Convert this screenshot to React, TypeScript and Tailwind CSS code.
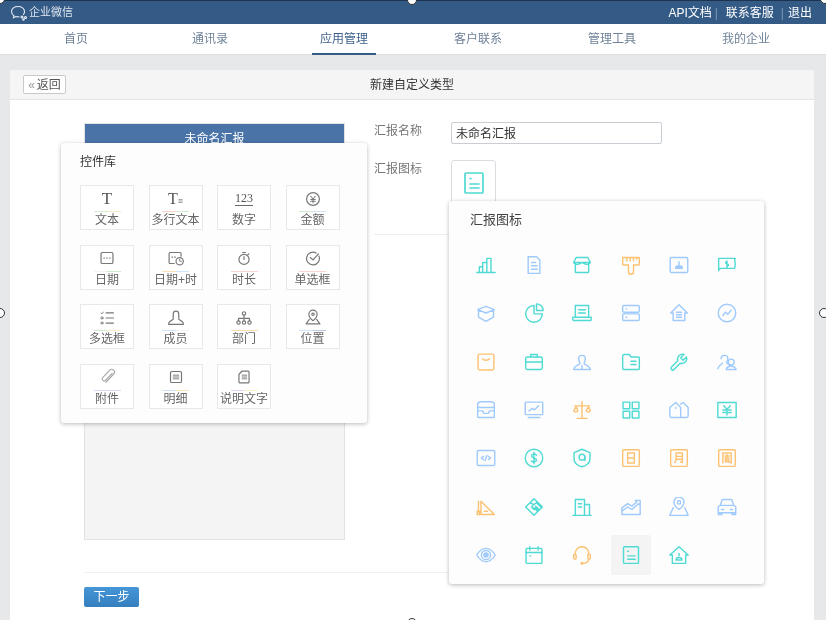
import type { ReactNode } from 'react';

const navItems = ['首页', '通讯录', '应用管理', '客户联系', '管理工具', '我的企业'];

const TEAL = '#4fdad3';
const BLUE = '#9fcafb';
const ORANGE = '#fcc272';

// light accent bar under each control tile
const controls: { name: string; bar: [string, string]; icon: ReactNode }[] = [
  { name: '文本', bar: ['#cdeccd', '#fbe6c8'], icon: <span className="font-['Liberation_Serif',serif] text-[17px] leading-none text-[#555]">T</span> },
  {
    name: '多行文本',
    bar: ['#fbd3c4', '#cdeccd'],
    icon: (
      <span className="flex items-end font-['Liberation_Serif',serif] text-[16px] leading-none text-[#555]">
        T<span className="pb-px text-[9px] leading-none">≡</span>
      </span>
    ),
  },
  { name: '数字', bar: ['#ffffff', '#ffffff'], icon: <span className="border-b border-[#666] font-['Liberation_Serif',serif] text-[12px] leading-[13px] text-[#555]">123</span> },
  {
    name: '金额',
    bar: ['#cdeccd', '#cfe3fb'],
    icon: (
      <G>
        <circle cx="12" cy="12" r="7" />
        <path d="M9.500 9l2.500 3 2.500-3M12 12v4M9.500 12.500h5M9.500 14.500h5" strokeWidth="1.100" />
      </G>
    ),
  },
  {
    name: '日期',
    bar: ['#f4f4f4', '#cdeccd'],
    icon: (
      <G>
        <rect x="5.500" y="6" width="13" height="12" rx="1.500" />
        <path d="M8.500 12h.8M11.600 12h.8M14.700 12h.8" />
      </G>
    ),
  },
  {
    name: '日期+时',
    bar: ['#fbe0b8', '#cfe3fb'],
    icon: (
      <G>
        <path d="M10 18H5.500a1 1 0 0 1-1-1V7a1 1 0 0 1 1-1h11a1 1 0 0 1 1 1v3" />
        <path d="M7.500 11h.8M10.500 11h.8" />
        <circle cx="16" cy="15.500" r="4" />
        <path d="M16 13.500v2h2" strokeWidth="1" />
      </G>
    ),
  },
  {
    name: '时长',
    bar: ['#fbd3d3', '#fbd3d3'],
    icon: (
      <G>
        <circle cx="12" cy="13.500" r="5.500" />
        <path d="M12 13.500v-3M10.500 6h3M16.200 8.500l1 -1" />
      </G>
    ),
  },
  {
    name: '单选框',
    bar: ['#fbd3d3', '#fbd3d3'],
    icon: (
      <G>
        <path d="M18.500 10a7 7 0 1 1-3-3.500" />
        <path d="M9 11.500l3 2.500 6-6.500" />
      </G>
    ),
  },
  {
    name: '多选框',
    bar: ['#cdeccd', '#fbf0c8'],
    icon: (
      <G>
        <path d="M11 6.500h8M11 12h8M11 17.500h8" />
        <path d="M5.500 6.500l1 1 1.500-2" strokeWidth="1" />
        <circle cx="6.500" cy="12" r="1.200" strokeWidth="1" />
        <circle cx="6.500" cy="17.500" r="1.200" strokeWidth="1" />
      </G>
    ),
  },
  {
    name: '成员',
    bar: ['#cfe3fb', '#f4f4f4'],
    icon: (
      <G>
        <path d="M9 13V7.500a3 3 0 0 1 6 0V13c0 1.500 5 2 5 5v1H4v-1c0-3 5-3.500 5-5z" />
      </G>
    ),
  },
  {
    name: '部门',
    bar: ['#fbdcae', '#fbdcae'],
    icon: (
      <G>
        <circle cx="12" cy="7" r="1.800" />
        <circle cx="6" cy="17" r="1.800" />
        <circle cx="12" cy="17" r="1.800" />
        <circle cx="18" cy="17" r="1.800" />
        <path d="M12 9v6M6 15v-2.500h12V15" />
      </G>
    ),
  },
  {
    name: '位置',
    bar: ['#cfe3fb', '#b9c9e6'],
    icon: (
      <G>
        <path d="M12 15s-4.500-3.500-4.500-7a4.500 4.500 0 0 1 9 0c0 3.500-4.500 7-4.500 7z" />
        <circle cx="12" cy="8" r="1.300" />
        <path d="M8 13.500l-3.500 5h15l-3.500-5" />
      </G>
    ),
  },
  {
    name: '附件',
    bar: ['#dcd8fb', '#dcd8fb'],
    icon: (
      <G stroke="#aaaaaa">
        <path d="M17.500 8l-7.500 8a2.200 2.200 0 0 1-3-3l8-8.500a3 3 0 0 1 4.300 4.200l-8.500 9" />
      </G>
    ),
  },
  {
    name: '明细',
    bar: ['#cfe3fb', '#fbe0b8'],
    icon: (
      <G>
        <rect x="6" y="6" width="12" height="12" rx="1.500" />
        <path d="M9 10h6M9 12h6M9 14h6" strokeWidth="1" />
      </G>
    ),
  },
  {
    name: '说明文字',
    bar: ['#e3d6f7', '#fbf0c8'],
    icon: (
      <G>
        <path d="M10 5.500h6.500a1 1 0 0 1 1 1v11a1 1 0 0 1-1 1h-9a1 1 0 0 1-1-1V9z" />
        <path d="M10 10h5M10 12h5M10 14h5" strokeWidth="1" />
      </G>
    ),
  },
];

function G({ children, stroke = '#777777' }: { children: ReactNode; stroke?: string }) {
  return (
    <svg width="22" height="22" viewBox="0 0 24 24" fill="none" stroke={stroke} strokeWidth="1.300" strokeLinecap="round" strokeLinejoin="round">
      {children}
    </svg>
  );
}

const reportIcons: { color: string; d: ReactNode; active?: boolean }[] = [
  { color: TEAL, d: <path d="M1 21h22M4 21v-7h4v7M8 21V9h5v12M13 21V4h5v17" /> },
  { color: BLUE, d: <path d="M5 2h10l4 4v16H5zM9 9h5M9 13h7M9 17h7" /> },
  { color: TEAL, d: <path d="M5 3h14l3 6H2zM4 9v11a1 1 0 0 0 1 1h14a1 1 0 0 0 1-1V9M2 9c2 3 6 3 10 0 4 3 8 3 10 0" /> },
  { color: ORANGE, d: <path d="M2 3h20v8a1 1 0 0 1-1 1h-6v8a3 3 0 0 1-6 0v-8H3a1 1 0 0 1-1-1zM7 3v4M11 3v4M15 3v4M19 3v2" /> },
  { color: BLUE, d: <><rect x="1.500" y="3" width="21" height="18" rx="1.500" /><path d="M12 8v4M8 16c0-2 2-3 4-3s4 1 4 3z" fill={BLUE} /></> },
  { color: TEAL, d: <path d="M2 4h20c-1.500 2-1 3-.5 4s.5 6-.5 8H5c-2 0-3 1-3 3zM12 8c-2-.5-2.500 2 0 2.500s2 3 0 2.500M12 7v8" /> },
  { color: BLUE, d: <path d="M12 4l10 4-10 4L2 8zM3 9v8l9 5 9-5V9" /> },
  { color: TEAL, d: <><path d="M12 3a10 10 0 1 0 10 10H12z" /><path d="M15 1a8 8 0 0 1 8 8h-8z" /></> },
  { color: TEAL, d: <path d="M4 3h16v14H4zM8 8h8M8 12h8M1 17h22v3a1 1 0 0 1-1 1H2a1 1 0 0 1-1-1z" /> },
  { color: BLUE, d: <><rect x="2" y="3" width="20" height="8" rx="1.500" /><rect x="2" y="13" width="20" height="8" rx="1.500" /><path d="M6 7h1M6 17h1" /></> },
  { color: BLUE, d: <path d="M12 2l10 10h-3v9H5v-9H2zM9 11h6M9 14h6M9 17h6" /> },
  { color: BLUE, d: <><circle cx="12" cy="12" r="10.500" /><path d="M7 15l3-4 3 2.500 4-5" /></> },
  { color: ORANGE, d: <><rect x="2.500" y="2.500" width="19" height="19" rx="2" /><path d="M8 8c1 2.500 7 2.500 8 0" /></> },
  { color: TEAL, d: <><rect x="2" y="6" width="20" height="15" rx="2" /><path d="M8 6V3h8v3M2 12h20M8 12h8" /></> },
  { color: BLUE, d: <path d="M8 8a4 4 0 0 1 8 0c0 2.500-1.500 4-1.500 6 0 1 7 2 7.500 7H2c.5-5 7.500-6 7.500-7C9.500 12 8 10.500 8 8zM12 16v5" /> },
  { color: TEAL, d: <path d="M2 5a2 2 0 0 1 2-2h6l2 3h9a1 1 0 0 1 1 1v13a1 1 0 0 1-1 1H3a1 1 0 0 1-1-1zM12 11h6M12 15h6" /> },
  { color: TEAL, d: <path d="M21 6l-4 4-3-3 4-4a6 6 0 0 0-7.500 7.500L3 18a2.100 2.100 0 0 0 3 3l7.500-7.500A6 6 0 0 0 21 6z" /> },
  { color: BLUE, d: <><path d="M5 8a4 4 0 0 1 8 0c0 2.500-1.500 3.500-1.500 5 0 1 3 1.500 4 3H16M1 20c.5-4 5.500-5 5.500-7" /><circle cx="17" cy="12" r="3.500" /><path d="M11 21c.500-3 3-4 6-4s5 1 6 4z" /></> },
  { color: BLUE, d: <path d="M2 4l3-2h14l3 2v16a1 1 0 0 1-1 1H3a1 1 0 0 1-1-1zM2 13h6l1 3h6l1-3h6M2 9h20" /> },
  { color: BLUE, d: <><rect x="1.500" y="2.500" width="21" height="15" rx="1" /><path d="M6 13l4-3 2.500 2 5-5M5 21h14" /></> },
  { color: ORANGE, d: <><path d="M12 2v20M6 22h12M3 7h18" /><path d="M2 13a3 3 0 0 0 5 0l-2-5zM17 13a3 3 0 0 0 5 0l-2-5z" /></> },
  { color: TEAL, d: <><rect x="2.500" y="2.500" width="8" height="8" /><rect x="13.500" y="2.500" width="8" height="8" /><rect x="2.500" y="13.500" width="8" height="8" /><rect x="13.500" y="13.500" width="8" height="8" /></> },
  { color: BLUE, d: <path d="M1 9l7-6 6 6v12H3a2 2 0 0 1-2-2zM14 5l3-2 6 6v10a2 2 0 0 1-2 2h-7M8 9v1" /> },
  { color: TEAL, d: <><rect x="1" y="3" width="22" height="18" /><path d="M8 7l4 4 4-4M7 12h10M7 15h10M12 11v7" /></> },
  { color: BLUE, d: <><rect x="1.500" y="3" width="21" height="18" rx="1.500" /><path d="M9 10l-2.500 2L9 14M15 10l2.500 2-2.500 2M13 9l-2 6" /></> },
  { color: TEAL, d: <><circle cx="12" cy="12" r="10.500" /><path d="M15 8.500c-2-2-6-1.500-6 1 0 3 6 2 6 5 0 2.500-4 3-6 1M12 5v14" /></> },
  { color: TEAL, d: <><path d="M12 1.500l9.500 4v8c0 4-4 7.500-9.500 9-5.500-1.500-9.500-5-9.500-9v-8z" /><circle cx="12" cy="11" r="3.500" /><path d="M15.500 11v4" /></> },
  { color: ORANGE, d: <><rect x="2" y="2" width="20" height="20" rx="1.500" /><path d="M8 6h8v12H8zM8 12h8" /></> },
  { color: ORANGE, d: <><rect x="2" y="2" width="20" height="20" rx="1.500" /><path d="M8.500 6h7.500v11.500l-2-1M8.500 6v6c0 3-.5 4-1.500 5.500M8.500 10h7.500M8.500 13.500h7.500" /></> },
  { color: ORANGE, d: <><rect x="2" y="2" width="20" height="20" rx="1.500" /><path d="M7 18V6h10v12l-2-1M9.500 9.500h5M12 8v4M9.500 12h5M10 14h4v2.500h-4z" /></> },
  { color: ORANGE, d: <><path d="M6 5v16h16L6 5zM3 5v13M1.500 17h3v4h-3z" /><path d="M10 17h4" /></> },
  { color: TEAL, d: <path d="M12 2l10 10-10 10L2 12zM7 7l5 2-3 3 3 3 2-2 3 3M12 9l3-2 5 5M14 11l4 4M12 13l4 4" /> },
  { color: TEAL, d: <path d="M1 22h22M4 22V3h11v19M15 9h6v13M7.500 8h4M7.500 12h4" /> },
  { color: BLUE, d: <path d="M1 13l7-5 5 3 6-5-2-2h6v6l-2-2-8 7-5-3-7 5zM1 13v8h22V9" /> },
  { color: BLUE, d: <><path d="M12 15s-6-4.500-6-9a6 6 0 0 1 12 0c0 4.500-6 9-6 9z" /><circle cx="12" cy="6.500" r="2" /><path d="M5 13l-4 9h22l-4-9" /></> },
  { color: BLUE, d: <><path d="M4 10l2-6a1 1 0 0 1 1-1h10a1 1 0 0 1 1 1l2 6M1.500 11.500L4 10h16l2.500 1.500V19h-21zM1.500 19v2h4.500v-2M18 19v2h4.500v-2" /><path d="M5.500 15h2.500M16 15h2.500" /></> },
  { color: BLUE, d: <><path d="M1 12c3-5 7-8 11-8s8 3 11 8c-3 5-7 8-11 8s-8-3-11-8z" /><circle cx="12" cy="12" r="5.500" /><circle cx="12" cy="12" r="2.500" fill={BLUE} /></> },
  { color: TEAL, d: <><rect x="2.500" y="4" width="19" height="18" rx="1" /><path d="M2.500 9h19M7 2v4M17 2v4M7 13h1" /></> },
  { color: ORANGE, d: <><path d="M4 11v-1a8 8 0 0 1 16 0v1M20 17c0 3-2.500 4.500-6.500 5" /><rect x="2" y="11" width="3" height="6" rx="1.500" /><rect x="19" y="11" width="3" height="6" rx="1.500" /><circle cx="12" cy="22" r="1" fill={ORANGE} /></> },
  { color: TEAL, active: true, d: <ReportGlyph /> },
  { color: TEAL, d: <path d="M12 2l11 10h-3v10H4V12H1zM12 10v3M8.500 18c0-2 1.500-3 3.500-3s3.500 1 3.500 3z" /> },
];

function ReportGlyph() {
  return <path d="M4 2h16a1 1 0 0 1 1 1v18a1 1 0 0 1-1 1H4a1 1 0 0 1-1-1V3a1 1 0 0 1 1-1zM8 7.500h1M8 13h9M8 17h9" />;
}

function ReportIcon({ color, children, size = 20 }: { color: string; children: ReactNode; size?: number }) {
  return (
    <svg width={size} height={size} viewBox="0 0 24 24" fill="none" stroke={color} strokeWidth="1.700" strokeLinejoin="round" strokeLinecap="round">
      {children}
    </svg>
  );
}

function ControlTile({ name, bar, icon }: (typeof controls)[number]) {
  return (
    <div className="flex h-[45px] w-[54px] flex-col items-center border border-[#e8e8e8] bg-white">
      <div className="flex h-[25px] items-center justify-center">{icon}</div>
      <div className="flex h-px w-[27px]">
        <div className="flex-1" style={{ background: bar[0] }} />
        <div className="flex-1" style={{ background: bar[1] }} />
      </div>
      <div className="text-[12px] leading-[16px] whitespace-nowrap text-[#666]">{name}</div>
    </div>
  );
}

function Handle({ className }: { className: string }) {
  return <div className={`absolute h-[10px] w-[10px] rounded-full border border-[#333] bg-white ${className}`} />;
}

export default function App() {
  return (
    <div className="relative h-[620px] w-[826px] overflow-hidden bg-[#e7e8ea] font-['Liberation_Sans','Noto_Sans_CJK_SC',sans-serif] text-[12px] antialiased blur-[0.35px]">
      <header className="flex h-[24px] items-center justify-between border-t border-[#1d3350] bg-[#345a86] pr-[14px] pl-[10px] text-white">
        <div className="flex items-center gap-[1px] text-[#dfe7f0]">
          <svg width="18" height="16" viewBox="0 0 18 16" fill="none" stroke="#e6edf5" strokeWidth="1.100" strokeLinecap="round">
            <path d="M13.500 9.500c.8-1 1-2 1-3C14.500 3.500 11.500 1.500 8 1.500S1.500 3.500 1.500 6.500c0 1.800 1 3.300 2.500 4.200l-.5 2 2.300-1.200c1 .3 2 .4 3.200.3" />
            <circle cx="12" cy="12" r="1" />
            <circle cx="15.500" cy="12.500" r="1" />
            <circle cx="13.500" cy="14.500" r="0.700" />
          </svg>
          <span className="text-[11px]">企业微信</span>
        </div>
        <div className="flex items-center text-[12px]">
          <span>API文档</span>
          <span className="ml-[3px] text-[#7d97b5]">|</span>
          <span className="ml-[8px]">联系客服</span>
          <span className="mr-[4px] ml-[7px] text-[#7d97b5]">|</span>
          <span>退出</span>
        </div>
      </header>

      <nav className="flex h-[31px] border-b border-[#dcdde0] bg-white pl-[9px]">
        {navItems.map((item, i) => (
          <div key={item} className={`relative flex w-[134px] items-center justify-center text-[12px] ${i === 2 ? 'text-[#3d5f8a]' : 'text-[#6f8298]'}`}>
            {item}
            {i === 2 && <div className="absolute bottom-[-1px] left-1/2 h-[2px] w-[64px] -translate-x-1/2 bg-[#345a86]" />}
          </div>
        ))}
      </nav>

      <main className="mx-[10px] mt-[15px] h-[560px] w-[804px] rounded-t-[2px] bg-white">
        <div className="relative flex h-[30px] items-center justify-center border-b border-[#e6e6e6] bg-[#f5f5f5] text-[#333]">
          <div className="absolute top-[5px] left-[13px] flex h-[19px] w-[43px] items-center justify-center gap-[2px] rounded-[2px] border border-[#c9c9c9] bg-white text-[#555]">
            <span className="text-[#999]">«</span>返回
          </div>
          新建自定义类型
        </div>

        <div className="flex pt-[23px] pl-[74px]">
          <div className="flex h-[417px] w-[261px] flex-col border border-[#e2e2e2] bg-[#f4f4f4]">
            <div className="flex h-[29px] items-center justify-center bg-[#4a74a8] text-[12px] text-white">未命名汇报</div>
          </div>
          <div className="mt-[-1px] ml-[29px] w-[390px]">
            <div className="flex items-start">
              <label className="w-[77px] text-[#777]">汇报名称</label>
              <div className="flex h-[22px] w-[211px] items-center rounded-[2px] border border-[#c9ced4] bg-white pt-[2px] pl-[4px] text-[#333]">未命名汇报</div>
            </div>
            <div className="mt-[16px] flex items-start">
              <label className="w-[77px] text-[#777]">汇报图标</label>
              <div className="flex h-[46px] w-[45px] items-center justify-center rounded-t-[3px] border border-[#d9dde2] bg-white">
                <ReportIcon color={TEAL} size={24}>
                  <ReportGlyph />
                </ReportIcon>
              </div>
            </div>
            <div className="mt-[28px] h-px bg-[#eeeeee]" />
          </div>
        </div>

        <div className="mt-[32px] mr-[50px] ml-[74px] h-px bg-[#f0f0f0]" />
        <button className="mt-[14px] ml-[74px] flex h-[20px] w-[55px] items-center justify-center rounded-[2px] bg-gradient-to-b from-[#4596d8] to-[#357fbe] text-[12px] text-white">下一步</button>
      </main>

      {/* 控件库 popover */}
      <div className="absolute top-[143px] left-[61px] h-[280px] w-[306px] rounded-[3px] bg-[#fdfdfd] pt-[12px] pl-[19px] shadow-[0_1px_4px_rgba(0,0,0,0.28)]">
        <div className="text-[12px] leading-[14px] text-[#333]">控件库</div>
        <div className="mt-[16px] grid grid-cols-[repeat(4,68.500px)] auto-rows-[59.500px]">
          {controls.map((c) => (
            <ControlTile key={c.name} {...c} />
          ))}
        </div>
      </div>

      {/* 汇报图标 popover */}
      <div className="absolute top-[201px] left-[449px] h-[383px] w-[315px] rounded-[3px] bg-[#fdfdfd] pt-[11px] pl-[13px] shadow-[0_1px_4px_rgba(0,0,0,0.28)]">
        <div className="pl-[8px] text-[13px] leading-[16px] text-[#444]">汇报图标</div>
        <div className="mt-[13px] grid grid-cols-[repeat(6,48.200px)] auto-rows-[48.300px]">
          {reportIcons.map((icon, i) => (
            <div key={i} className="flex items-center justify-center">
              <div className={`flex h-[40px] w-[40px] items-center justify-center rounded-[2px] ${icon.active ? 'bg-[#f4f4f4]' : ''}`}>
                <ReportIcon color={icon.color}>{icon.d}</ReportIcon>
              </div>
            </div>
          ))}
        </div>
      </div>

      {/* selection handles of the screenshot frame */}
      <Handle className="top-[-6px] left-[-5px]" />
      <Handle className="top-[-5px] left-[407px]" />
      <Handle className="top-[-6px] right-[-4px]" />
      <Handle className="top-[308px] left-[-5px]" />
      <Handle className="top-[308px] right-[-3px]" />
      <Handle className="bottom-[-8px] left-[407px]" />
    </div>
  );
}
